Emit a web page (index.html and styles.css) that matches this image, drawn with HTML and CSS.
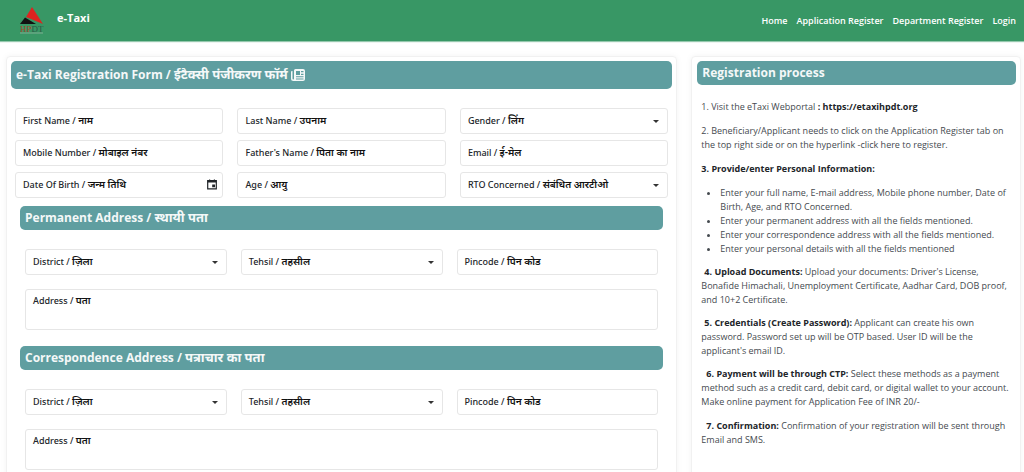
FILE: index.html
```html
<!DOCTYPE html>
<html lang="en">
<head>
<meta charset="utf-8">
<meta name="viewport" content="width=device-width, initial-scale=1">
<title>e-Taxi Registration</title>
<link rel="stylesheet" href="styles.css">
</head>
<body>
<header class="navbar">
  <a class="brand" href="#">
    <svg class="logo" viewBox="0 0 26 28" aria-hidden="true">
      <path d="M12 0 L23 17 L6 10 Z" fill="#dc2420"/>
      <path d="M5 10.500 L16 17 H0 Z" fill="#111"/>
      <text x="0" y="24.500" class="logo-text"><tspan fill="#a4492f">HP</tspan><tspan fill="#2c5a45">DT</tspan></text>
      <path d="M0 26 H23" stroke="#7fae93" stroke-width="1"/>
    </svg>
    <span class="brand-name">e-Taxi</span>
  </a>
  <nav class="links">
    <a href="#">Home</a>
    <a href="#">Application Register</a>
    <a href="#">Department Register</a>
    <a href="#">Login</a>
  </nav>
</header>
<main class="page">
  <form class="card form-card">
    <h1 class="bar bar-main">e-Taxi Registration Form / <span lang="hi">ईटैक्सी पंजीकरण फॉर्म</span>
      <svg class="news" viewBox="0 0 14 12" aria-hidden="true">
        <path d="M4.500 0 H12 Q14 0 14 2 V10 Q14 12 12 12 H2.500 Q0 12 0 9.500 V3 Q0 2 1 2 H1.500 V9.500 Q1.500 10.500 2.300 10.500 Q3 10.500 3 9.500 V1.500 Q3 0 4.500 0 Z M5 2 V6 H9 V2 Z M10 2 V3.200 H12.500 V2 Z M10 4.800 V6 H12.500 V4.800 Z M5 7.300 V8.300 H12.500 V7.300 Z M5 9.500 V10.500 H12.500 V9.500 Z" fill="currentColor" fill-rule="evenodd"/>
      </svg>
    </h1>
    <div class="grid personal">
      <div class="field"><input type="text" id="first"><label for="first">First Name / <b lang="hi">नाम</b></label></div>
      <div class="field"><input type="text" id="last"><label for="last">Last Name / <b lang="hi">उपनाम</b></label></div>
      <div class="field"><select id="gender"><option></option></select><label for="gender">Gender / <b lang="hi">लिंग</b></label></div>
      <div class="field"><input type="tel" id="mobile"><label for="mobile">Mobile Number / <b lang="hi">मोबाइल नंबर</b></label></div>
      <div class="field"><input type="text" id="father"><label for="father">Father's Name / <b lang="hi">पिता का नाम</b></label></div>
      <div class="field"><input type="email" id="email"><label for="email">Email / <b lang="hi">ई-मेल</b></label></div>
      <div class="field"><input type="text" id="dob"><label for="dob">Date Of Birth / <b lang="hi">जन्म तिथि</b></label>
        <svg class="calendar" viewBox="0 0 10 11" aria-hidden="true"><path d="M0.700 1.700 H9.300 V9.800 H0.700 Z" fill="none" stroke="currentColor" stroke-width="1.200"/><path d="M0.500 1.500 H9.500 V3.600 H0.500 Z M2 0.500 H3.200 V2 H2 Z M6.800 0.500 H8 V2 H6.800 Z M5.200 5.500 H8 V8.300 H5.200 Z" fill="currentColor"/></svg>
      </div>
      <div class="field"><input type="text" id="age"><label for="age">Age / <b lang="hi">आयु</b></label></div>
      <div class="field"><select id="rto"><option></option></select><label for="rto">RTO Concerned / <b lang="hi">संबंधित आरटीओ</b></label></div>
    </div>
    <section class="address">
      <h2 class="bar">Permanent Address / <span lang="hi">स्थायी पता</span></h2>
      <div class="grid location">
        <div class="field"><select id="p-district"><option></option></select><label for="p-district">District / <b lang="hi">ज़िला</b></label></div>
        <div class="field"><select id="p-tehsil"><option></option></select><label for="p-tehsil">Tehsil / <b lang="hi">तहसील</b></label></div>
        <div class="field"><input type="text" id="p-pin"><label for="p-pin">Pincode / <b lang="hi">पिन कोड</b></label></div>
        <div class="field wide"><textarea id="p-address"></textarea><label for="p-address">Address / <b lang="hi">पता</b></label></div>
      </div>
    </section>
    <section class="address">
      <h2 class="bar">Correspondence Address / <span lang="hi">पत्राचार का पता</span></h2>
      <div class="grid location">
        <div class="field"><select id="c-district"><option></option></select><label for="c-district">District / <b lang="hi">ज़िला</b></label></div>
        <div class="field"><select id="c-tehsil"><option></option></select><label for="c-tehsil">Tehsil / <b lang="hi">तहसील</b></label></div>
        <div class="field"><input type="text" id="c-pin"><label for="c-pin">Pincode / <b lang="hi">पिन कोड</b></label></div>
        <div class="field wide"><textarea id="c-address"></textarea><label for="c-address">Address / <b lang="hi">पता</b></label></div>
      </div>
    </section>
  </form>
  <aside class="card process">
    <h2 class="bar">Registration process</h2>
    <div class="steps">
      <p>1. Visit the eTaxi Webportal <strong>: https://etaxihpdt.org</strong></p>
      <p>2. Beneficiary/Applicant needs to click on the Application Register tab on the top right side or on the hyperlink -click here to register.</p>
      <p><strong>3. Provide/enter Personal Information:</strong></p>
      <ul>
        <li>Enter your full name, E-mail address, Mobile phone number, Date of Birth, Age, and RTO Concerned.</li>
        <li>Enter your permanent address with all the fields mentioned.</li>
        <li>Enter your correspondence address with all the fields mentioned.</li>
        <li>Enter your personal details with all the fields mentioned</li>
      </ul>
      <p class="indent"><strong>4. Upload Documents:</strong> Upload your documents: Driver's License, Bonafide Himachali, Unemployment Certificate, Aadhar Card, DOB proof, and 10+2 Certificate.</p>
      <p class="indent"><strong>5. Credentials (Create Password):</strong> Applicant can create his own password. Password set up will be OTP based. User ID will be the applicant's email ID.</p>
      <p class="indent deep"><strong>6. Payment will be through CTP:</strong> Select these methods as a payment method such as a credit card, debit card, or digital wallet to your account. Make online payment for Application Fee of INR 20/-</p>
      <p class="indent deep"><strong>7. Confirmation:</strong> Confirmation of your registration will be sent through Email and SMS.</p>
    </div>
  </aside>
</main>
</body>
</html>
```
FILE: styles.css
```css
* { box-sizing: border-box; }
body {
  margin: 0;
  background: #fff;
  color: #212529;
  font-family: "Open Sans", "Noto Sans", "Noto Sans Devanagari", sans-serif;
  font-size: 9px;
  line-height: 14px;
}
.navbar {
  display: flex;
  justify-content: space-between;
  align-items: center;
  height: 41px;
  padding: 0 8px 0 20px;
  background: #389765;
  box-shadow: 0 1px 1px #38976588;
}
.brand, .links a { color: #fff; text-decoration: none; font-weight: 600; }
.brand { display: flex; gap: 11px; }
.brand-name { font-size: 11px; line-height: 22px; font-weight: 700; }
.logo { width: 26px; height: 28px; }
.logo-text { font-family: "Liberation Serif", serif; font-size: 9px; font-weight: 400; }
.links { display: flex; gap: 9px; }

.page {
  display: grid;
  grid-template-columns: 672fr 330fr;
  gap: 14px;
  padding: 15px 3px 0 6px;
}
.card {
  padding: 4px;
  border: 1px solid #f1f1f1;
  border-radius: 4px;
  box-shadow: 0 0 6px #0000000d;
}
.bar {
  margin: 0;
  padding: 0 5px;
  border-radius: 5px;
  background: #5f9ea0;
  color: #f4f8f8;
  font-size: 12px;
  line-height: 24px;
  font-weight: 700;
}
.bar span { font-size: 13px; line-height: 1; }
.bar-main { line-height: 28px; }
.news { width: 14px; height: 12px; vertical-align: -2px; }

.grid { display: grid; grid-template-columns: repeat(3, 1fr); column-gap: 14px; }
.personal { row-gap: 6px; padding: 19px 4px 8px; }
.location { row-gap: 14px; padding: 19px 5px 16px; }
.address { padding: 0 9px; }
.field { display: grid; align-items: center; }
.field > * { grid-area: 1 / 1; }
.field label {
  padding: 0 8px;
  font-family: "Noto Sans", "Noto Sans Devanagari", sans-serif;
  font-weight: 500;
  pointer-events: none;
}
.field b { font-size: 10px; line-height: 1; font-weight: 600; color: #111; }
input, select, textarea {
  display: block;
  width: 100%;
  height: 26px;
  margin: 0;
  padding: 0 8px;
  border: 1px solid #e6e6e6;
  border-radius: 3px;
  background: #fff;
  font: inherit;
  color: inherit;
}
select {
  appearance: none;
  background: url("data:image/svg+xml,%3Csvg xmlns='http://www.w3.org/2000/svg' viewBox='0 0 6 3'%3E%3Cpath d='M0 0h6L3 3z' fill='%23333'/%3E%3C/svg%3E") no-repeat right 8px center / 6px 3px #fff;
}
textarea { height: 41px; resize: none; }
.wide { grid-column: 1 / -1; }
.wide label { align-self: start; padding-top: 5px; }
.calendar { justify-self: end; width: 10px; height: 11px; margin: 0 6px 2px 0; }

.process { padding-left: 5px; }
.steps { padding: 15px 4px 8px; color: #454a4f; }
.steps p { margin: 0 0 10px; }
.steps ul { margin: 0 0 9px; padding-left: 19px; }
.steps strong { color: #212529; }
.steps .indent { margin-bottom: 9px; text-indent: 3px; }
.steps .deep { margin-bottom: 10px; text-indent: 5px; }
```
